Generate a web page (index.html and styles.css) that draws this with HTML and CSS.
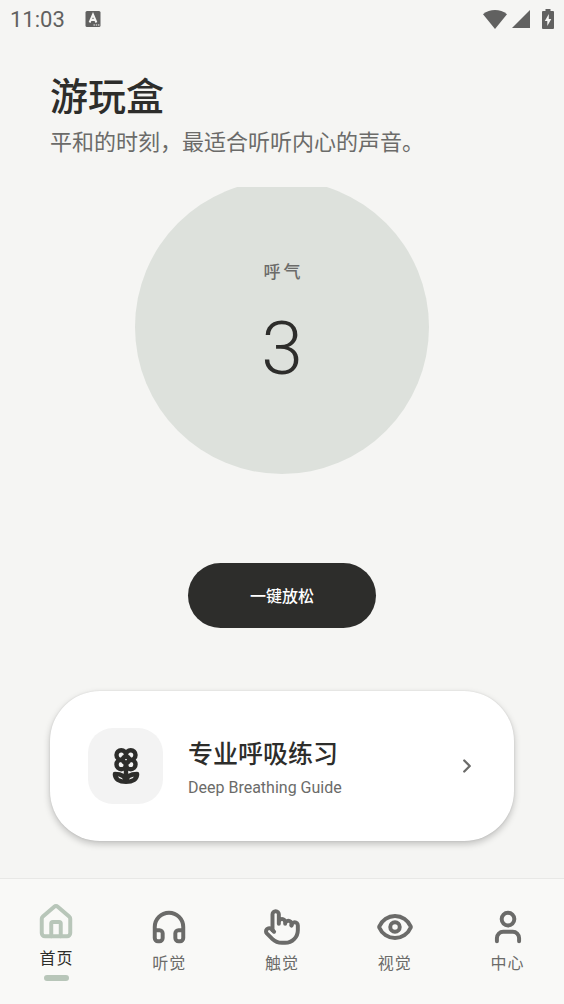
FILE: index.html
```html
<!DOCTYPE html>
<html lang="zh-CN">
<head>
<meta charset="utf-8">
<meta name="viewport" content="width=device-width, initial-scale=1">
<title>游玩盒</title>
<link rel="stylesheet" href="styles.css">
</head>
<body>
<div class="app">
  <div class="status">
    <span class="status-time">11:03</span>
    <svg class="status-app" viewBox="0 0 16 16" aria-hidden="true"><rect x="0.5" width="15" height="16" rx="1.5" fill="#616160"/><path d="M4.6 11.5 8 3.6l3.4 7.9M5.9 9h4.2" fill="none" stroke="#f5f5f3" stroke-width="2"/><path d="M8.5 14h1.4M10.8 14h1.4M13 14h1.4" stroke="#f5f5f3" stroke-width="1.2"/></svg>
    <div class="status-right">
      <svg class="wifi" viewBox="0 0 24 19" aria-hidden="true"><path d="M0 4.2C7-1.4 17-1.4 24 4.2L12 19z"/></svg>
      <svg class="signal" viewBox="0 0 18 18" aria-hidden="true"><path d="M18 0v18H0z"/></svg>
      <svg class="battery" viewBox="0 0 12 20" aria-hidden="true"><path d="M3.5 0h5v2H11a1 1 0 0 1 1 1v16a1 1 0 0 1-1 1H1a1 1 0 0 1-1-1V3a1 1 0 0 1 1-1h2.500z"/><path d="M6.800 5 2.800 12h2.500v5l4-7H6.800z" fill="#f5f5f3"/></svg>
    </div>
  </div>

  <main class="content">
    <header class="intro">
      <h1 class="title">游玩盒</h1>
      <p class="subtitle">平和的时刻，最适合听听内心的声音。</p>
    </header>

    <section class="breath">
      <div class="orb">
        <span class="orb-label">呼气</span>
        <span class="orb-count">3</span>
      </div>
    </section>

    <button class="relax" type="button">一键放松</button>

    <a class="guide" href="#guide">
      <span class="guide-icon">
        <svg class="icon" viewBox="0 0 24 24" aria-hidden="true"><path d="M12 5a3 3 0 1 1 3 3m-3-3a3 3 0 1 0-3 3m3-3v1M9 8a3 3 0 1 0 3 3M9 8h1m5 0a3 3 0 1 1-3 3m3-3h-1m-2 3v-1"/><circle cx="12" cy="8" r="2"/><path d="M12 10v12M12 22c4.200 0 7-1.667 7-5-4.200 0-7 1.667-7 5ZM12 22c-4.200 0-7-1.667-7-5 4.200 0 7 1.667 7 5Z"/></svg>
      </span>
      <span class="guide-text">
        <span class="guide-title">专业呼吸练习</span>
        <span class="guide-sub">Deep Breathing Guide</span>
      </span>
      <svg class="chevron" viewBox="0 0 24 24" aria-hidden="true"><path d="m9 18 6-6-6-6"/></svg>
    </a>
  </main>

  <nav class="tabs">
    <a class="tab tab-active" href="#home" aria-current="page">
      <svg class="icon" viewBox="0 0 24 24" aria-hidden="true"><path d="M15 21v-8a1 1 0 0 0-1-1h-4a1 1 0 0 0-1 1v8"/><path d="M3 10a2 2 0 0 1 .709-1.528l7-5.999a2 2 0 0 1 2.582 0l7 5.999A2 2 0 0 1 21 10v9a2 2 0 0 1-2 2H5a2 2 0 0 1-2-2z"/></svg>
      <span class="tab-label">首页</span>
      <span class="tab-mark"></span>
    </a>
    <a class="tab" href="#listen">
      <svg class="icon" viewBox="0 0 24 24" aria-hidden="true"><path d="M3 14h3a2 2 0 0 1 2 2v3a2 2 0 0 1-2 2H5a2 2 0 0 1-2-2v-7a9 9 0 0 1 18 0v7a2 2 0 0 1-2 2h-1a2 2 0 0 1-2-2v-3a2 2 0 0 1 2-2h3"/></svg>
      <span class="tab-label">听觉</span>
    </a>
    <a class="tab" href="#touch">
      <svg class="icon" viewBox="0 0 24 24" aria-hidden="true"><path d="M18 11v-1a2 2 0 0 0-4 0M14 10V9a2 2 0 0 0-4 0v1M10 9.500V4a2 2 0 0 0-4 0v10"/><path d="M18 11a2 2 0 1 1 4 0v3a8 8 0 0 1-8 8h-2c-2.800 0-4.500-.860-5.990-2.340l-3.600-3.600a2 2 0 0 1 2.830-2.820L7 15"/></svg>
      <span class="tab-label">触觉</span>
    </a>
    <a class="tab" href="#sight">
      <svg class="icon" viewBox="0 0 24 24" aria-hidden="true"><path d="M2.062 12.348a1 1 0 0 1 0-.696 10.750 10.750 0 0 1 19.876 0 1 1 0 0 1 0 .696 10.750 10.750 0 0 1-19.876 0"/><circle cx="12" cy="12" r="3"/></svg>
      <span class="tab-label">视觉</span>
    </a>
    <a class="tab" href="#me">
      <svg class="icon" viewBox="0 0 24 24" aria-hidden="true"><path d="M19 21v-2a4 4 0 0 0-4-4H9a4 4 0 0 0-4 4v2"/><circle cx="12" cy="7" r="4"/></svg>
      <span class="tab-label">中心</span>
    </a>
  </nav>
</div>
</body>
</html>
```

FILE: styles.css
```css
* { box-sizing: border-box; }

body {
  margin: 0;
  background: #f5f5f3;
  color: #2d2d2b;
  font-family: Roboto, "Noto Sans CJK SC", sans-serif;
}

a { color: inherit; text-decoration: none; }

.app {
  display: flex;
  flex-direction: column;
  min-height: 100vh;
}

.status {
  display: flex;
  align-items: center;
  height: 38px;
  padding: 0 10px;
  color: #616160;
}
.status-time { padding-top: 2px; font-size: 22px; line-height: 36px; }
.status-app { width: 16px; height: 16px; margin-left: 20px; }
.status-right {
  display: flex;
  align-items: center;
  margin-left: auto;
  fill: #616160;
}
.wifi { width: 24px; height: 19px; }
.signal { width: 18px; height: 18px; margin-left: 5px; }
.battery { width: 12px; height: 20px; margin-left: 12px; }

.content {
  display: flex;
  flex-direction: column;
  flex: 1;
  padding: 33px 50px 37px;
}

.title {
  margin: 0;
  font-size: 38px;
  line-height: 52px;
  font-weight: 500;
}
.subtitle {
  margin: 0;
  padding-top: 4px;
  font-size: 22px;
  line-height: 32px;
  color: #6b6b69;
}

.breath {
  display: flex;
  justify-content: center;
  margin-top: 28px;
  overflow: hidden;
}
.orb {
  display: flex;
  flex-direction: column;
  align-items: center;
  width: 294px;
  height: 294px;
  margin-top: -7px;
  padding-top: 80px;
  border-radius: 50%;
  background: #dde1dc;
}
.orb-label {
  padding-left: 3px;
  font-size: 17px;
  line-height: 24px;
  font-weight: 500;
  letter-spacing: 3px;
  color: #6b6b69;
}
.orb-count {
  padding-top: 20px;
  font-size: 75px;
  line-height: 88px;
  font-weight: 300;
}

.relax {
  align-self: center;
  margin-top: 89px;
  padding: 21px 62px 19px;
  border: 0;
  border-radius: 33px;
  background: #2d2d2b;
  color: #fff;
  font: 500 16px/25px Roboto, "Noto Sans CJK SC", sans-serif;
}

.guide {
  display: flex;
  align-items: center;
  margin-top: auto;
  padding: 37px 36px 37px 38px;
  border-radius: 50px;
  background: #fff;
  box-shadow: 0 3px 7px rgba(0, 0, 0, 0.22), 0 0 2px rgba(0, 0, 0, 0.1);
}
.guide-icon {
  display: grid;
  place-items: center;
  width: 75px;
  height: 76px;
  border-radius: 25px;
  background: #f3f3f3;
}
.guide-text {
  display: flex;
  flex-direction: column;
  flex: 1;
  margin-left: 25px;
  padding-top: 3px;
}
.guide-title { font-size: 25px; line-height: 36px; font-weight: 500; }
.guide-sub { padding-top: 4px; font-size: 16px; line-height: 22px; color: #6b6b69; }

.icon, .chevron {
  display: block;
  width: 38px;
  height: 38px;
  fill: none;
  stroke: currentColor;
  stroke-width: 2.5;
  stroke-linecap: round;
  stroke-linejoin: round;
}
.guide-icon .icon { stroke-width: 2.8; }
.chevron {
  width: 22px;
  height: 22px;
  color: #6b6b69;
}

.tabs {
  display: grid;
  grid-template-columns: repeat(5, 1fr);
  height: 126px;
  border-top: 1px solid #e8e8e6;
  background: #f9f9f7;
  color: #6b6b69;
}
.tab {
  display: flex;
  flex-direction: column;
  align-items: center;
  justify-content: center;
}
.tab-label {
  padding-top: 7px;
  font-size: 16px;
  line-height: 22px;
  letter-spacing: 1px;
}
.tab-active .icon { color: #b8c6b9; }
.tab-active { color: #2d2d2b; }
.tab-mark {
  width: 25px;
  height: 6px;
  margin-top: 5px;
  border-radius: 3px;
  background: #b8c6b9;
}
```
